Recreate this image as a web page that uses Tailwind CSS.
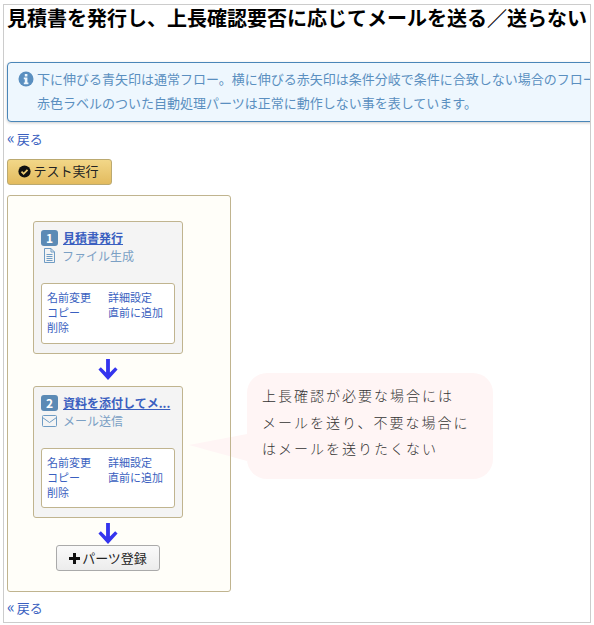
<!DOCTYPE html>
<html lang="ja">
<head>
  <meta charset="utf-8">
  <title>見積書を発行し、上長確認要否に応じてメールを送る／送らない</title>
  <script src="https://cdn.jsdelivr.net/npm/@tailwindcss/browser@4"></script>
</head>
<body class="bg-white font-['Noto_Sans_CJK_JP','Liberation_Sans',sans-serif] text-[13px] text-black">
  <div class="mx-[3px] mt-[4px] h-[619px] w-[588px] overflow-hidden border border-[#cccccc] px-[3px]">
    <h1 class="h-[26px] text-[20px] leading-[26px] font-bold whitespace-nowrap">見積書を発行し、上長確認要否に応じてメールを送る／送らない</h1>

    <div class="mt-[31px] h-[60px] w-[640px] rounded-[4px] border border-[#4a86b8] bg-[#eef7fe] pt-[4px] pl-[10px] text-[13px] leading-[24px] whitespace-nowrap text-[#5a8fc0] shadow-[0_1px_3px_rgba(0,0,0,0.2)]">
      <div class="flex items-center gap-[3px]">
        <svg class="h-[16px] w-[16px]" viewBox="0 0 16 16"><circle cx="8" cy="8" r="7.5" fill="#5a8fc0"/><rect x="6.8" y="3" width="2.6" height="2.5" fill="#eef7fe"/><path d="M5.8 6.6h3.6v5h1v1.6H5.8v-1.6h1V8.2h-1z" fill="#eef7fe"/></svg>
        <span>下に伸びる青矢印は通常フロー。横に伸びる赤矢印は条件分岐で条件に合致しない場合のフロー</span>
      </div>
      <div class="pl-[19px]">赤色ラベルのついた自動処理パーツは正常に動作しない事を表しています。</div>
    </div>

    <a class="mt-[7px] block h-[20px] leading-[20px] text-[#3a5fc0]" href="#"><span class="pr-[2px] text-[16px] leading-none">«</span>戻る</a>

    <button type="button" class="mt-[10px] flex h-[26px] w-[105px] items-center justify-center gap-[2px] rounded-[3px] border border-[#bba970] bg-gradient-to-b from-[#f2d788] to-[#e3bb5e] pr-[2px] pb-[2px] text-[13px] text-[#222]">
      <svg class="h-[13px] w-[13px]" viewBox="0 0 16 16"><circle cx="8" cy="8" r="7.5" fill="#111"/><path d="M4.3 8.2l2.6 2.6 4.8-4.8" fill="none" stroke="#eccb72" stroke-width="2.2"/></svg>
      テスト実行
    </button>

    <div class="mt-[10px] flex items-start">
      <div class="flex h-[397px] w-[224px] shrink-0 flex-col items-center rounded-[3px] border border-[#c0b48f] bg-[#fffef9] pt-[25px] pr-[47px] pl-[25px]">
        <div class="h-[133px] w-[150px] shrink-0 rounded-[3px] border border-[#c0b48f] bg-[#f4f4f4] px-[7px] pt-[7px]">
          <div class="flex h-[17px] items-center gap-[5px]">
            <span class="flex h-[16px] w-[17px] items-center justify-center rounded-[3px] bg-[#5b8ab5] text-[12px] leading-none font-bold text-white">1</span>
            <a class="text-[12px] leading-[17px] font-bold text-[#3a5fc0] underline" href="#">見積書発行</a>
          </div>
          <div class="mt-[1px] flex h-[17px] items-center gap-[6px] text-[12px] text-[#7ba0c4]">
            <svg class="ml-[2px] h-[15px] w-[13px]" viewBox="0 0 13 15" fill="none" stroke="#6f9cc4"><path d="M1.5.5h6.5l3.500 3.500v10.500h-10zM8 .5v3.500h3.500M3.500 6.500h6M3.500 8.500h6M3.500 10.500h6M3.500 12.500h6"/></svg>
            <span>ファイル生成</span>
          </div>
          <div class="mt-[19px] grid h-[61px] w-[134px] grid-cols-[61px_1fr] content-start rounded-[3px] border border-[#c0b48f] bg-white pt-[6px] pl-[5px] text-[11px] leading-[15px] text-[#3a5fc0]">
            <a href="#">名前変更</a><a href="#">詳細設定</a>
            <a href="#">コピー</a><a href="#">直前に追加</a>
            <a href="#">削除</a>
          </div>
        </div>

        <svg class="my-[5px] h-[22px] w-[20px] shrink-0" viewBox="0 0 20 23" fill="#3434ee"><path d="M8 0h4v14l5.500-5.500 2.500 2.500-10 11L0 11l2.500-2.500L8 14z"/></svg>

        <div class="h-[132px] w-[150px] shrink-0 rounded-[3px] border border-[#c0b48f] bg-[#f4f4f4] px-[7px] pt-[7px]">
          <div class="flex h-[17px] items-center gap-[5px]">
            <span class="flex h-[16px] w-[17px] items-center justify-center rounded-[3px] bg-[#5b8ab5] text-[12px] leading-none font-bold text-white">2</span>
            <a class="text-[12px] leading-[17px] font-bold whitespace-nowrap text-[#3a5fc0] underline" href="#">資料を添付してメ...</a>
          </div>
          <div class="mt-[1px] flex h-[17px] items-center gap-[6px] text-[12px] text-[#7ba0c4]">
            <svg class="ml-[1px] h-[12px] w-[15px]" viewBox="0 0 15 12" fill="none" stroke="#6f9cc4"><rect x=".5" y=".5" width="14" height="11" rx="1"/><path d="M.5 2.500l7 5 7-5"/></svg>
            <span>メール送信</span>
          </div>
          <div class="mt-[19px] grid h-[60px] w-[134px] grid-cols-[61px_1fr] content-start rounded-[3px] border border-[#c0b48f] bg-white pt-[6px] pl-[5px] text-[11px] leading-[15px] text-[#3a5fc0]">
            <a href="#">名前変更</a><a href="#">詳細設定</a>
            <a href="#">コピー</a><a href="#">直前に追加</a>
            <a href="#">削除</a>
          </div>
        </div>

        <svg class="mt-[5px] h-[22px] w-[20px] shrink-0" viewBox="0 0 20 23" fill="#3434ee"><path d="M8 0h4v14l5.500-5.500 2.500 2.500-10 11L0 11l2.500-2.500L8 14z"/></svg>

        <button type="button" class="flex h-[26px] w-[104px] shrink-0 items-center justify-center gap-[2px] rounded-[3px] border border-[#aaaaaa] bg-gradient-to-b from-[#fafafa] to-[#ececec] text-[13px] text-[#222]">
          <svg class="h-[11px] w-[11px]" viewBox="0 0 11 11" fill="#111"><path d="M4 0h3v4h4v3H7v4H4V7H0V4h4z"/></svg>
          パーツ登録
        </button>
      </div>

      <div class="relative mt-[178px] ml-[16px] h-[106px] w-[246px] shrink-0 rounded-[20px] bg-[#fff5f5] pt-[9px] pl-[15px] text-[14px] leading-[26.500px] font-light tracking-[2px] text-[#333]">
        <svg class="absolute top-[61px] -left-[58px] h-[28px] w-[58px]" viewBox="0 0 58 28"><path d="M58 0L0 11l58 16z" fill="#fff5f5"/><path d="M41.500 0v28" stroke="#c0b48f"/></svg>
        <p>上長確認が必要な場合には</p>
        <p>メールを送り、不要な場合に</p>
        <p>はメールを送りたくない</p>
      </div>
    </div>

    <a class="mt-[6px] block h-[20px] leading-[20px] text-[#3a5fc0]" href="#"><span class="pr-[2px] text-[16px] leading-none">«</span>戻る</a>
  </div>
</body>
</html>
